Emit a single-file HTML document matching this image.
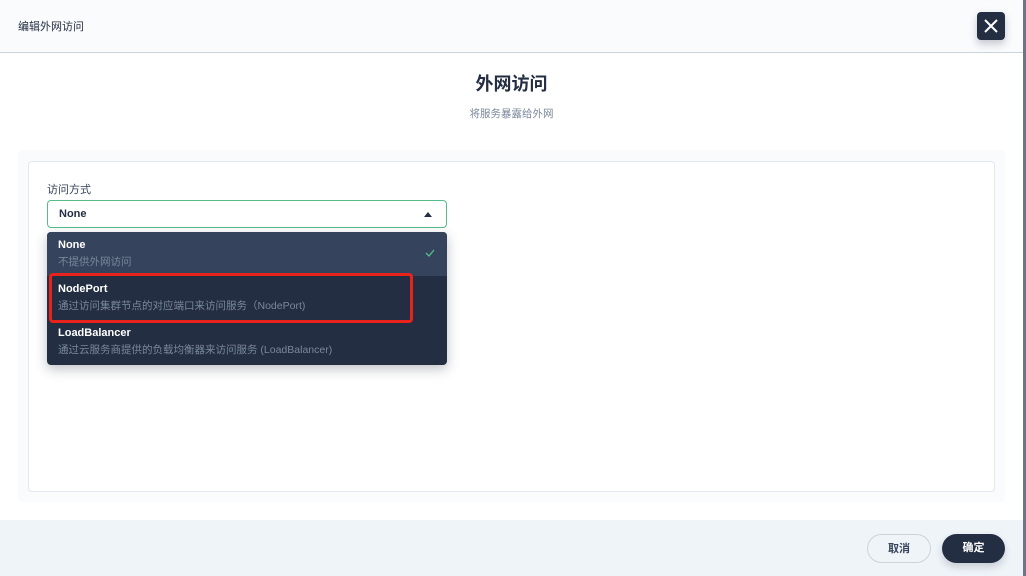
<!DOCTYPE html>
<html><head><meta charset="utf-8"><style>
*{box-sizing:border-box;margin:0;padding:0}
body{width:1026px;height:576px;overflow:hidden;background:#fff;font-family:"Liberation Sans","Noto Sans CJK SC",sans-serif;color:#242e42;position:relative}
.hdr{position:absolute;left:0;top:0;width:1023px;height:53px;background:#f9fbfd;border-bottom:1px solid #ccd3db}
.hdr .t{position:absolute;left:18px;top:18px;font-size:11px;color:#242e42}
.close{position:absolute;left:977px;top:12px;width:28px;height:28px;background:#242e42;border-radius:4px;box-shadow:0 4px 8px rgba(36,46,66,.25)}
.edge{position:absolute;left:1023px;top:0;width:3px;height:576px;background:#6c7585}
h1{position:absolute;left:0;width:1023px;text-align:center;top:70px;font-size:18px;font-weight:bold}
.sub{position:absolute;left:0;width:1023px;text-align:center;top:106px;font-size:10.5px;color:#79879c}
.wrap{position:absolute;left:18px;top:150px;width:987px;height:352px;background:#f9fbfd;border-radius:4px}
.box{position:absolute;left:28px;top:161px;width:967px;height:331px;background:#fff;border:1px solid #e3e9ef;border-radius:4px}
.lbl{position:absolute;left:47px;top:181px;font-size:11px;color:#36435c}
.sel{position:absolute;left:47px;top:200px;width:400px;height:28px;border:1px solid #55bc8a;border-radius:4px;font-size:11px;font-weight:bold;padding:7px 11px;color:#242e42}
.sel .ar{position:absolute;right:14px;top:11px;width:0;height:0;border-left:4px solid transparent;border-right:4px solid transparent;border-bottom:5px solid #242e42}
.dd{position:absolute;left:47px;top:232px;width:400px;height:133px;background:#242e42;border-radius:4px;box-shadow:0 4px 12px rgba(36,46,66,.3);overflow:hidden}
.it{height:44px;padding:6px 11px;font-size:10.5px;position:relative}
.it b{display:block;color:#fff;font-size:11px;line-height:14px}
.it span{display:block;color:#79879c;line-height:16px;margin-top:2px}
.it.a{background:#36435c}
.red{position:absolute;left:49px;top:273px;width:364px;height:50px;border:3px solid #e8231c;border-radius:4px}
.ftr{position:absolute;left:0;top:520px;width:1023px;height:56px;background:#eff4f9}
.btn{position:absolute;top:534px;height:29px;border-radius:15px;font-size:11px;font-weight:bold;text-align:center;line-height:28px}
</style></head><body>
<div class="hdr"><div class="t">编辑外网访问</div></div>
<div class="close"><svg width="28" height="28"><path d="M8 8L20 20M20 8L8 20" stroke="#fff" stroke-width="2"/></svg></div>
<div class="edge"></div>
<h1>外网访问</h1>
<div class="sub">将服务暴露给外网</div>
<div class="wrap"></div>
<div class="box"></div>
<div class="lbl">访问方式</div>
<div class="sel">None<div class="ar"></div></div>
<div class="dd">
<div class="it a"><b>None</b><span>不提供外网访问</span><svg style="position:absolute;right:12px;top:17px" width="10" height="8"><path d="M1 4L4 7L9 1" stroke="#55bc8a" stroke-width="1.3" fill="none"/></svg></div>
<div class="it"><b>NodePort</b><span>通过访问集群节点的对应端口来访问服务（NodePort)</span></div>
<div class="it"><b>LoadBalancer</b><span>通过云服务商提供的负载均衡器来访问服务 (LoadBalancer)</span></div>
</div>
<div class="red"></div>
<div class="ftr"></div>
<div class="btn" style="left:867px;width:64px;border:1px solid #ccd3db;background:#eff4f9;color:#36435c">取消</div>
<div class="btn" style="left:942px;width:63px;background:#242e42;color:#fff;box-shadow:0 4px 8px rgba(36,46,66,.2)">确定</div>
</body></html>
